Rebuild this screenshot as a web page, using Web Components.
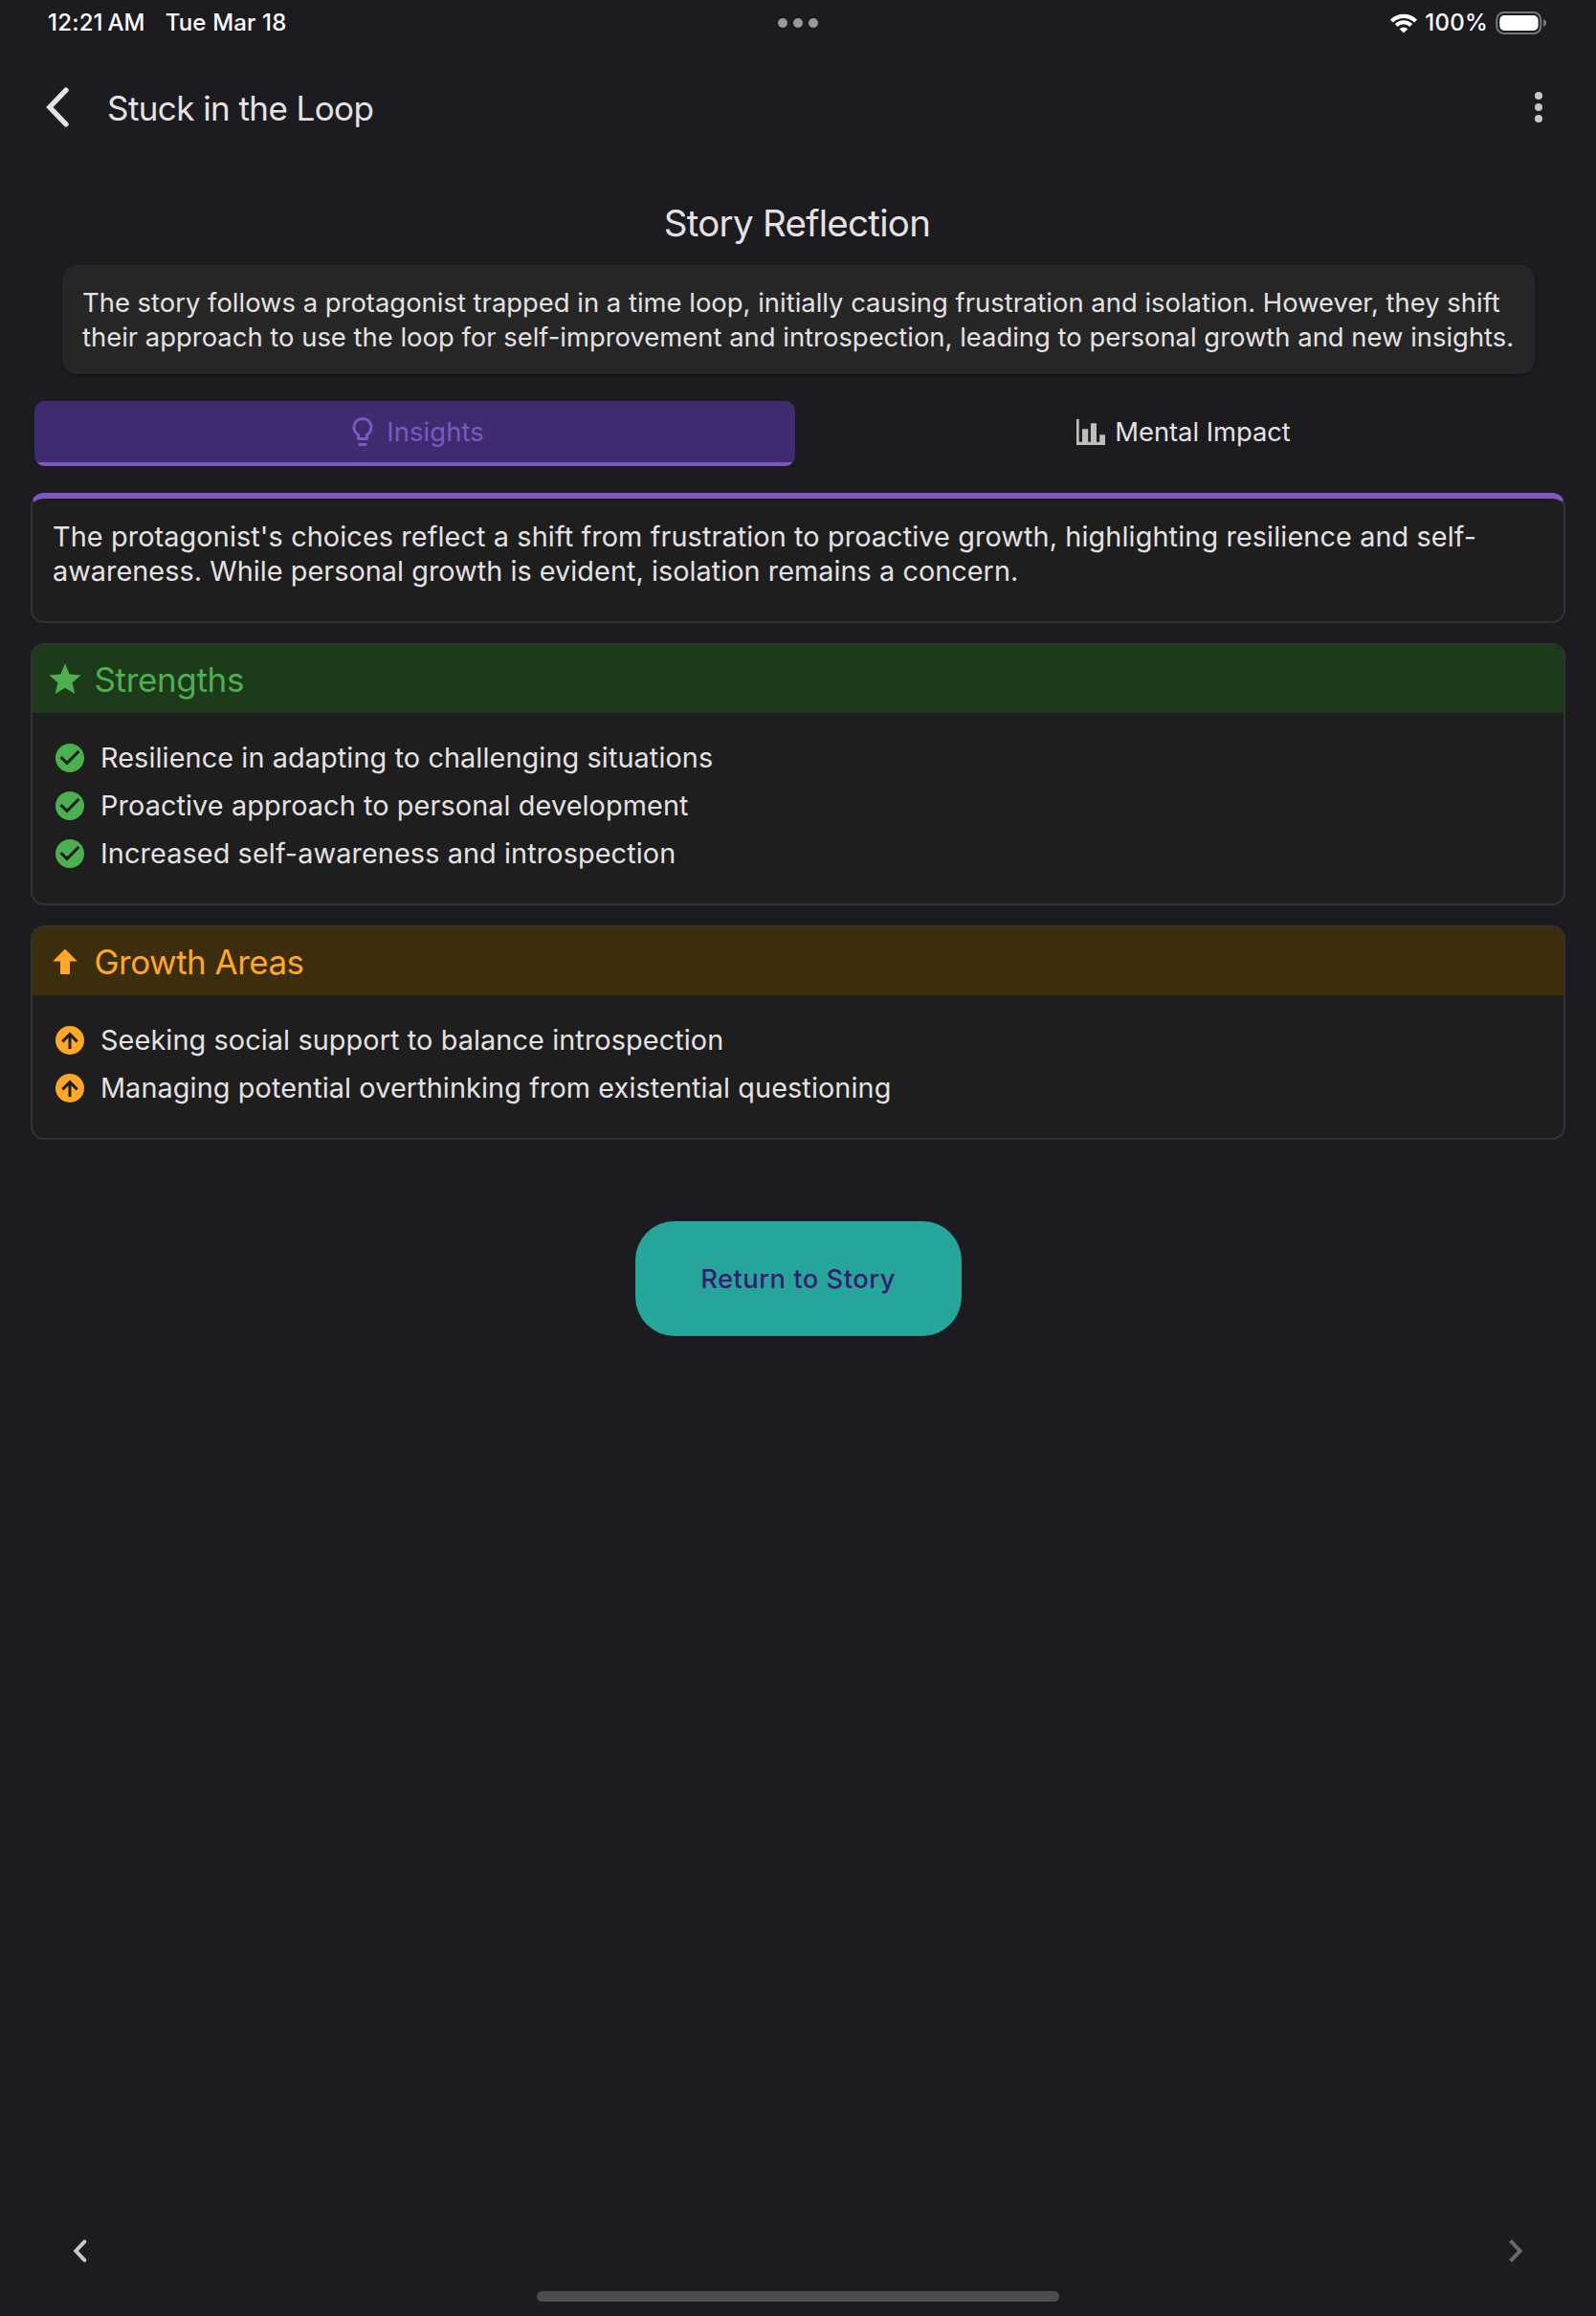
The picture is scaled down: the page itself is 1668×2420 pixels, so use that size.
<!DOCTYPE html>
<html lang="en">
<head>
<meta charset="utf-8">
<title>Stuck in the Loop</title>
<style>
  html, body { margin: 0; padding: 0; background: #1c1b1f; }
  body { font-family: Inter, "Liberation Sans", sans-serif; color: #e6e1e5; }
</style>
</head>
<body>
<reflection-screen></reflection-screen>

<script>
const define = (name, html) => {
  const tpl = document.createElement('template');
  tpl.innerHTML = html;
  customElements.define(name, class extends HTMLElement {
    constructor() {
      super();
      this.attachShadow({ mode: 'open' }).append(tpl.content.cloneNode(true));
    }
  });
};

const ICONS = {
  bulb: '<svg viewBox="0 0 24 24"><path fill="currentColor" d="M9 21c0 .55.45 1 1 1h4c.55 0 1-.45 1-1v-1H9v1zm3-19C8.14 2 5 5.14 5 9c0 2.38 1.19 4.47 3 5.74V17c0 .55.45 1 1 1h6c.55 0 1-.45 1-1v-2.26c1.81-1.27 3-3.36 3-5.74 0-3.86-3.14-7-7-7zm2.85 11.1l-.85.6V16h-4v-2.3l-.85-.6C7.8 12.16 7 10.63 7 9c0-2.76 2.24-5 5-5s5 2.24 5 5c0 1.63-.8 3.16-2.15 4.1z"/></svg>',
  chart: '<svg viewBox="0 0 36 36"><path fill="currentColor" d="M3 5h2.7v23.7H9V15.3h6.2v13.4h2.7V9.3H24v19.4h3.2v-7.4H33V32H3z"/></svg>',
  star: '<svg viewBox="0 0 24 24"><path fill="currentColor" d="M12 17.27L18.18 21l-1.64-7.03L22 9.24l-7.19-.61L12 2 9.19 8.63 2 9.24l5.46 4.73L5.82 21z"/></svg>',
  arrow: '<svg viewBox="0 0 40 40"><path fill="currentColor" d="M20 6.400L32.800 19.600H25V32.900H15V19.600H7.200z"/></svg>',
  check: '<svg viewBox="0 0 24 24"><path fill="currentColor" d="M12 2C6.480 2 2 6.480 2 12s4.480 10 10 10 10-4.480 10-10S17.520 2 12 2zm-2 15l-5-5 1.410-1.410L10 14.170l7.590-7.590L19 8l-9 9z"/></svg>',
  up: '<svg viewBox="0 0 24 24"><circle cx="12" cy="12" r="10" fill="currentColor"/><path fill="none" stroke="#1e1e1e" stroke-width="2" d="M12 18V8M6.900 12.900L12 7.800l5.100 5.100"/></svg>',
  back: '<svg viewBox="0 0 24 42"><path fill="none" stroke="currentColor" stroke-width="5.400" stroke-linecap="round" d="M21 3.200L3.900 21 21 38.800"/></svg>',
  prev: '<svg viewBox="0 0 15 24"><path fill="none" stroke="currentColor" stroke-width="4" stroke-linecap="round" d="M12.300 2.300L3.300 12l9 9.700"/></svg>',
  next: '<svg viewBox="0 0 15 24"><path fill="none" stroke="currentColor" stroke-width="4" d="M1.600 1.400L11.700 12 1.600 22.600"/></svg>',
  wifi: '<svg viewBox="0 0 28 21"><g fill="none" stroke="currentColor"><path stroke-width="4.200" d="M1.350 8.050a17.900 17.900 0 0 1 25.300 0"/><path stroke-width="4" d="M6.200 12.500a11 11 0 0 1 15.600 0"/></g><path fill="currentColor" d="M14 20.600l-4.300-4.400a6.100 6.100 0 0 1 8.600 0z"/></svg>',
  battery: '<svg viewBox="0 0 54 24"><rect x="1.300" y="1" width="46" height="22" rx="7.500" fill="none" stroke="#77767a" stroke-width="2"/><rect x="4.300" y="4" width="40.300" height="16" rx="5" fill="#fff"/><path fill="#77767a" d="M50 8.300c2 .5 3.300 1.900 3.300 3.700S52 15.200 50 15.700z"/></svg>',
  dots: '<svg viewBox="0 0 42 10"><g fill="currentColor"><circle cx="5" cy="5" r="5"/><circle cx="21" cy="5" r="5"/><circle cx="37" cy="5" r="5"/></g></svg>',
  more: '<svg viewBox="0 0 8 32"><g fill="currentColor"><circle cx="4" cy="4" r="4"/><circle cx="4" cy="16" r="4"/><circle cx="4" cy="28" r="4"/></g></svg>'
};

customElements.define('ui-icon', class extends HTMLElement {
  constructor() {
    super();
    const w = this.getAttribute('w'), h = this.getAttribute('h') || w;
    this.attachShadow({ mode: 'open' }).innerHTML =
      `<style>:host{display:block;flex:none;width:${w}px;height:${h}px}svg{display:block;width:100%;height:100%}</style>` +
      ICONS[this.getAttribute('name')];
  }
});

define('status-bar', `
  <style>
    :host { display: grid; grid-template-columns: 1fr auto 1fr; align-items: center; height: 48px;
      padding: 0 51px; color: #fff; font-size: 24px; font-weight: 500; line-height: 28px; white-space: pre; }
    .left { display: flex; gap: 21px; margin-left: -1px; }
    .left span:first-child { word-spacing: -2px; letter-spacing: .2px; }
    .left span:last-child { letter-spacing: .166px; }
    .right { display: flex; align-items: center; justify-content: flex-end; }
    .pct { letter-spacing: .35px; margin: 0 7.700px 0 8px; }
    .mid { color: #99989d; }
  </style>
  <div class="left"><span>12:21 AM</span><span>Tue Mar 18</span></div>
  <ui-icon class="mid" name="dots" w="42" h="10"></ui-icon>
  <div class="right"><ui-icon name="wifi" w="28" h="21"></ui-icon><span class="pct">100%</span><ui-icon name="battery" w="54" h="24"></ui-icon></div>`);

define('app-header', `
  <style>
    :host { display: flex; align-items: center; height: 128px; padding: 0 56px 0 47.500px; }
    .title { flex: 1; margin-left: 40.500px; padding-top: 2px; font-size: 35px; line-height: 42px; letter-spacing: -.58px; }
    .more { color: #cac4d0; }
  </style>
  <ui-icon name="back" w="24" h="42"></ui-icon>
  <div class="title"><slot></slot></div>
  <ui-icon class="more" name="more" w="8" h="32"></ui-icon>`);

define('summary-box', `
  <style>
    :host { display: block; box-sizing: border-box; height: 114px; margin: 21px 64px 0 65px; padding: 21px; border-radius: 15px;
      background: #262626; box-shadow: 0 2px 3px rgba(0,0,0,.3); font-size: 27.400px; line-height: 36px; letter-spacing: .01px; white-space: nowrap; }
  </style>
  <slot></slot>`);

define('tab-item', `
  <style>
    :host { flex: 793 0 0; display: flex; box-sizing: border-box; height: 68px; align-items: center; justify-content: center; gap: 7px;
      border-radius: 11px; border-bottom: 4px solid transparent; font-size: 27.400px; line-height: 34px; letter-spacing: -.05px; }
    :host([active]) { flex-grow: 795; border-bottom: 0; padding-bottom: 4px; color: #7e57c2; letter-spacing: .1px;
      background: linear-gradient(#3f2b70 64px, #7e57c2 64px); }
  </style>
  <slot name="icon"></slot><span><slot></slot></span>`);

define('tab-bar', `
  <style>:host { display: flex; gap: 8px; margin: 28px 36px 0; }</style>
  <slot></slot>`);

define('insight-card', `
  <style>
    :host { display: block; box-sizing: border-box; height: 136px; margin: 28px 32px 0; padding: 22px 21px 0; background: #1e1e1e;
      border: 2px solid #333; border-top: 6px solid #7e57c2; border-radius: 14px;
      font-size: 28.800px; line-height: 36px; letter-spacing: .12px; white-space: nowrap; }
  </style>
  <slot></slot>`);

define('section-card', `
  <style>
    :host { display: block; margin: 21px 32px 0; background: #1e1e1e; border: 2px solid #333; border-radius: 14px; overflow: hidden; }
    .head { display: flex; align-items: center; gap: 10.500px; height: 71px; padding-left: 14px; box-sizing: border-box;
      color: var(--accent); background: var(--head); font-size: 35px; line-height: 42px; letter-spacing: var(--track); }
    .list { display: flex; flex-direction: column; padding: 22px 21px 27px; }
  </style>
  <div class="head"><slot name="icon"></slot><slot name="title"></slot></div>
  <div class="list"><slot></slot></div>`);

define('list-row', `
  <style>
    :host { display: flex; align-items: center; gap: 14px; height: 50px; font-size: 28.800px; line-height: 36px; letter-spacing: .11px; white-space: nowrap; }
    ::slotted(ui-icon) { color: var(--accent); }
  </style>
  <slot name="icon"></slot><span><slot></slot></span>`);

define('pill-button', `
  <style>
    :host { display: block; align-self: center; margin-top: 85px; }
    button { display: block; width: 341px; height: 120px; padding: 0; border: 0; border-radius: 41px; background: #26a69a; color: #381e72;
      font: 500 27.400px/34px Inter, "Liberation Sans", sans-serif; letter-spacing: .45px; }
  </style>
  <button><slot></slot></button>`);

define('page-nav', `
  <style>
    :host { display: flex; justify-content: space-between; margin: auto 76px 30px; color: #cac4d0; }
    .next { color: #69676b; }
  </style>
  <ui-icon name="prev" w="15" h="24"></ui-icon><ui-icon class="next" name="next" w="15" h="24"></ui-icon>`);

define('home-indicator', `
  <style>:host { display: block; align-self: center; width: 546px; height: 11px; margin-bottom: 15px; border-radius: 6px; background: #4d4d4d; }</style>`);

define('reflection-screen', `
  <style>
    :host { display: flex; flex-direction: column; width: 1668px; height: 2420px; background: #1c1b1f; overflow: hidden; }
    h1 { margin: 34px 2px 0 0; text-align: center; font-weight: 400; font-size: 38.500px; line-height: 46px; letter-spacing: -.716px; }
    .green { --accent: #4caf50; --head: #1d3a1b; --track: -.35px; }
    .amber { --accent: #ffa726; --head: #3c2d0c; --track: -.52px; }
    .chart { color: #bdbdbd; }
    .tight { letter-spacing: .05px; }
  </style>
  <status-bar></status-bar>
  <app-header>Stuck in the Loop</app-header>
  <h1>Story Reflection</h1>
  <summary-box>The story follows a protagonist trapped in a time loop, initially causing frustration and isolation. However, they shift<br>their approach to use the loop for self-improvement and introspection, leading to personal growth and new insights.</summary-box>
  <tab-bar>
    <tab-item active><ui-icon slot="icon" name="bulb" w="36"></ui-icon>Insights</tab-item>
    <tab-item><ui-icon class="chart" slot="icon" name="chart" w="36"></ui-icon>Mental Impact</tab-item>
  </tab-bar>
  <insight-card>The protagonist's choices reflect a shift from frustration to proactive growth, highlighting resilience and self-<br><span class="tight">awareness. While personal growth is evident, isolation remains a concern.</span></insight-card>
  <section-card class="green">
    <ui-icon slot="icon" name="star" w="40"></ui-icon><span slot="title">Strengths</span>
    <list-row><ui-icon slot="icon" name="check" w="36"></ui-icon>Resilience in adapting to challenging situations</list-row>
    <list-row><ui-icon slot="icon" name="check" w="36"></ui-icon>Proactive approach to personal development</list-row>
    <list-row><ui-icon slot="icon" name="check" w="36"></ui-icon>Increased self-awareness and introspection</list-row>
  </section-card>
  <section-card class="amber">
    <ui-icon slot="icon" name="arrow" w="40"></ui-icon><span slot="title">Growth Areas</span>
    <list-row><ui-icon slot="icon" name="up" w="36"></ui-icon>Seeking social support to balance introspection</list-row>
    <list-row><ui-icon slot="icon" name="up" w="36"></ui-icon>Managing potential overthinking from existential questioning</list-row>
  </section-card>
  <pill-button>Return to Story</pill-button>
  <page-nav></page-nav>
  <home-indicator></home-indicator>`);
</script>
</body>
</html>
